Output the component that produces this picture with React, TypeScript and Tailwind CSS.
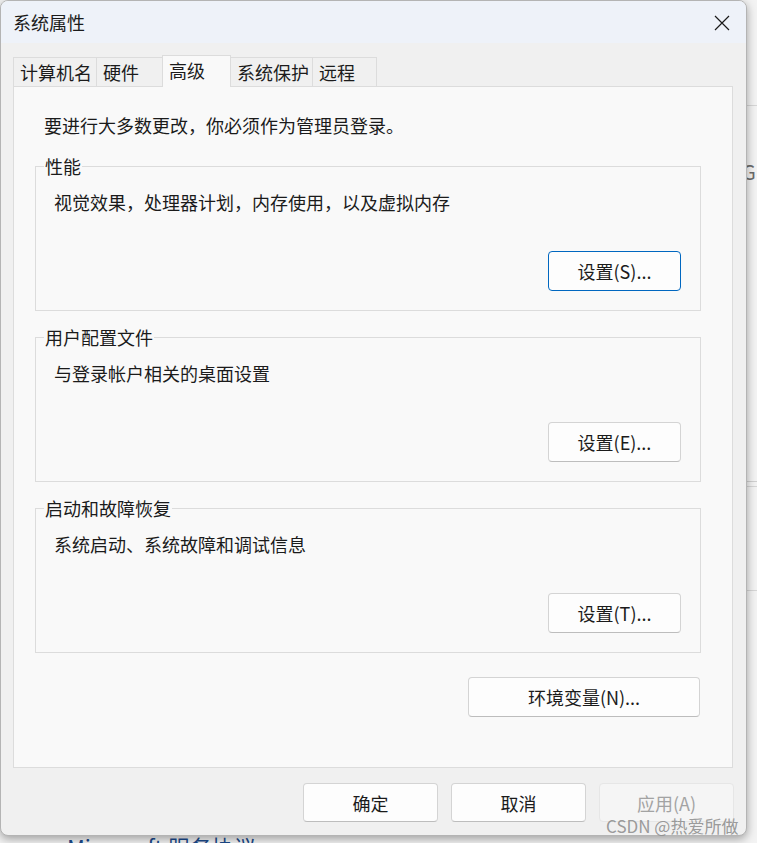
import type { ReactNode } from 'react';

const font = { fontFamily: '"Noto Sans CJK SC", "Noto Sans", sans-serif' };

type BtnProps = {
  children: ReactNode;
  className?: string;
  primary?: boolean;
  disabled?: boolean;
};

function Btn({ children, className = '', primary, disabled }: BtnProps) {
  const tone = disabled
    ? 'bg-[#f5f5f5] border-[#e6e6e6] text-[#a3a3a3]'
    : primary
      ? 'bg-[#fdfdfd] border-[#0067c0] text-[#1b1b1b]'
      : 'bg-[#fdfdfd] border-[#d4d4d4] border-b-[#bdbdbd] text-[#1b1b1b]';
  return (
    <div
      className={`flex items-center justify-center rounded-[4px] border text-[18px] leading-[18px] ${tone} ${className}`}
    >
      {children}
    </div>
  );
}

type GroupProps = {
  legend: string;
  text: string;
  button: string;
  primary?: boolean;
};

function Group({ legend, text, button, primary }: GroupProps) {
  return (
    <div className="relative flex h-[145px] w-[666px] flex-col border border-[#dcdcdc]">
      <span className="absolute left-[8px] top-[-10px] bg-[#f9f9f9] px-px text-[18px] leading-[18px]">
        {legend}
      </span>
      <div className="pl-[18px] pt-[26px] text-[18px] leading-[18px]">{text}</div>
      <Btn primary={primary} className="mb-[19px] mr-[19px] mt-auto h-[40px] w-[133px] self-end">
        {button}
      </Btn>
    </div>
  );
}

const tabs = [
  { label: '计算机名', cls: 'w-[84px] border-l' },
  { label: '硬件', cls: 'w-[66px]' },
  { label: '高级', cls: 'w-[69px] -ml-px border-l', active: true },
  { label: '系统保护', cls: 'w-[82px]' },
  { label: '远程', cls: 'w-[64px]' },
];

export default function App() {
  return (
    <div className="relative h-[843px] w-[757px] overflow-hidden bg-[#f3f3f3] text-[#1b1b1b]" style={font}>
      {/* desktop behind the dialog */}
      <div className="absolute left-[740px] top-[105px] h-px w-[20px] bg-[#d6d6d6]" />
      <div className="absolute left-[742px] top-[160px] text-[20px] leading-[24px] text-[#6b6b6b]">GI</div>
      <div className="absolute left-[740px] top-[481px] h-px w-[20px] bg-[#d0d0d0]" />
      <div className="absolute left-[740px] top-[486px] h-px w-[20px] bg-[#d6d6d6]" />
      <div className="absolute left-[740px] top-[590px] h-px w-[20px] bg-[#d6d6d6]" />
      <div className="absolute left-[67px] top-[833px] text-[22px] leading-[26px] text-[#1c4b8c]">
        Microsoft 服务协议
      </div>

      {/* dialog */}
      <div className="absolute left-0 top-0 flex h-[836px] w-[747px] flex-col overflow-hidden rounded-[8px] border border-[#b4b4b4] bg-[#f0f0f0] shadow-[0_3px_10px_rgba(0,0,0,0.35)]">
        <div className="flex h-[42px] items-center justify-between bg-[#eef2f9] pl-[12px] pr-[16px]">
          <span className="text-[18px] leading-[18px]">系统属性</span>
          <svg width="16" height="16" viewBox="0 0 16 16" className="mt-px">
            <path d="M1 1L15 15M15 1L1 15" stroke="#1a1a1a" strokeWidth="1.2" fill="none" />
          </svg>
        </div>

        <div className="flex flex-1 flex-col px-[12px]">
          {/* tabs */}
          <div className="mt-[12px] flex h-[31px] items-end">
            {tabs.map(t => (
              <div
                key={t.label}
                className={`relative flex items-center border-t border-r border-[#dcdcdc] pl-[6px] text-[18px] leading-[18px] ${t.cls} ${
                  t.active ? 'z-10 -mb-px h-[32px] bg-[#f9f9f9] pb-[3px]' : 'h-[29px] bg-[#f0f0f0]'
                }`}
              >
                {t.label}
              </div>
            ))}
          </div>

          {/* panel */}
          <div className="flex h-[682px] w-[720px] flex-col border border-[#dcdcdc] bg-[#f9f9f9] px-[21px] pt-[29px]">
            <div className="ml-[9px] text-[18px] leading-[18px]">要进行大多数更改，你必须作为管理员登录。</div>
            <div className="mt-[32px]">
              <Group legend="性能" text="视觉效果，处理器计划，内存使用，以及虚拟内存" button="设置(S)..." primary />
            </div>
            <div className="mt-[26px]">
              <Group legend="用户配置文件" text="与登录帐户相关的桌面设置" button="设置(E)..." />
            </div>
            <div className="mt-[26px]">
              <Group legend="启动和故障恢复" text="系统启动、系统故障和调试信息" button="设置(T)..." />
            </div>
            <div className="mt-[24px] flex w-[666px] justify-end pr-px">
              <Btn className="h-[40px] w-[232px]">环境变量(N)...</Btn>
            </div>
          </div>

          {/* footer */}
          <div className="mt-[15px] flex justify-end gap-[13px]">
            <Btn className="h-[39px] w-[135px]">确定</Btn>
            <Btn className="h-[39px] w-[135px]">取消</Btn>
            <Btn className="h-[39px] w-[135px]" disabled>
              应用(A)
            </Btn>
          </div>
        </div>
      </div>

      {/* watermark */}
      <div className="absolute left-[606px] top-[817px] text-[17px] leading-[17px] text-[#8f8f8f]/90">
        CSDN @热爱所做
      </div>
    </div>
  );
}
